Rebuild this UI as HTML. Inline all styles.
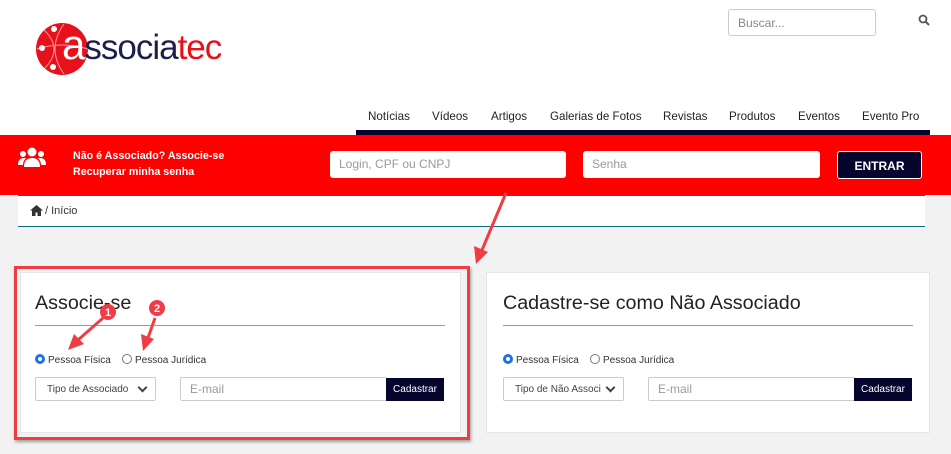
<!DOCTYPE html>
<html><head><meta charset="utf-8"><style>
*{box-sizing:border-box;margin:0;padding:0}
body{width:951px;height:454px;overflow:hidden;background:#f2f2f2;font-family:"Liberation Sans",sans-serif;position:relative}
.abs{position:absolute}
.top{left:0;top:0;width:951px;height:135px;background:#fff}
.nav{top:110px;font-size:11.6px;color:#222}
.card{background:#fff;border:1px solid #e6e6e6}
.title{font-size:19.7px;color:#222}
.hr{height:1px;background:#999}
.rad{font-size:10px;color:#333;top:354px}
.rad i{display:inline-block;width:10px;height:10px;border-radius:50%;border:1px solid #777;vertical-align:-1px;margin-right:3px}
.rad i.on{border:3px solid #1a73e8;box-shadow:inset 0 0 0 1px #fff}
.sel{height:24px;border:1px solid #ccc;border-radius:2px;font-size:10px;color:#444;padding:6px 0 0 11px;background:#fff}
.sel:after{content:"";position:absolute;right:9px;top:6px;width:5px;height:5px;border-right:2px solid #444;border-bottom:2px solid #444;transform:rotate(45deg)}
.em{height:24px;border:1px solid #ccc;border-radius:2px;font-size:12px;color:#999;padding:4px 0 0 9px;background:#fff}
.btn{height:23px;background:#05052e;color:#fff;font-size:10px;text-align:center;padding-top:6px}
</style></head><body>
<div class="abs top"></div>
<!-- logo -->
<svg class="abs" style="left:34px;top:21px" width="56" height="56" viewBox="0 0 56 56">
<circle cx="28" cy="28" r="26" fill="#e8101b"/>
<path d="M10 9 Q30 28 10 48 M30 3 Q12 28 30 53 M3 28 Q28 20 54 28" stroke="#fff" stroke-width="1" fill="none" opacity=".6"/>
<circle cx="20" cy="8" r="3" fill="#fff"/><circle cx="8" cy="27" r="3" fill="#fff"/><circle cx="19" cy="46" r="3" fill="#fff"/>
</svg>
<div class="abs" style="left:62px;top:23px;font-size:35px;letter-spacing:-1px;line-height:44px"><span style="color:#fff;font-size:42px">a</span><span style="color:#1c1f4a">ssocia</span><span style="color:#e8101b">tec</span></div>
<div class="abs" style="left:728px;top:9px;width:148px;height:27px;border:1px solid #ccc;border-radius:3px;font-size:12px;color:#888;padding:6px 0 0 9px">Buscar...</div>
<svg class="abs" style="left:918px;top:14px" width="12" height="12" viewBox="0 0 12 12"><circle cx="5" cy="5" r="3.5" stroke="#555" stroke-width="1.8" fill="none"/><path d="M7.5 7.5L11 11" stroke="#555" stroke-width="2"/></svg>
<div class="abs nav" style="left:368px">Notícias</div>
<div class="abs nav" style="left:432px">Vídeos</div>
<div class="abs nav" style="left:491px">Artigos</div>
<div class="abs nav" style="left:550px">Galerias de Fotos</div>
<div class="abs nav" style="left:663px">Revistas</div>
<div class="abs nav" style="left:729px">Produtos</div>
<div class="abs nav" style="left:798px">Eventos</div>
<div class="abs nav" style="left:862px">Evento Pro</div>
<div class="abs" style="left:356px;top:130px;width:574px;height:5px;background:#05052e"></div>
<!-- red bar -->
<div class="abs" style="left:0;top:135px;width:951px;height:60px;background:#fe0000"></div>
<svg class="abs" style="left:17px;top:147px" width="30" height="21" viewBox="0 0 30 21"><g fill="#fff"><circle cx="15" cy="5" r="4.5"/><circle cx="6" cy="7" r="3"/><circle cx="24" cy="7" r="3"/><path d="M7 20 Q7 11 15 11 Q23 11 23 20Z"/><path d="M1 18 Q1 11 7 11 L9 11 Q6 14 6 18Z"/><path d="M29 18 Q29 11 23 11 L21 11 Q24 14 24 18Z"/></g></svg>
<div class="abs" style="left:73px;top:148px;color:#fff;font-size:10.7px;font-weight:bold;line-height:16px">Não é Associado? Associe-se<br>Recuperar minha senha</div>
<div class="abs" style="left:330px;top:151px;width:236px;height:27px;background:#fff;border-radius:3px;font-size:12px;color:#999;padding:6px 0 0 9px">Login, CPF ou CNPJ</div>
<div class="abs" style="left:583px;top:151px;width:237px;height:27px;background:#fff;border-radius:3px;font-size:12px;color:#999;padding:6px 0 0 9px">Senha</div>
<div class="abs" style="left:837px;top:151px;width:85px;height:28px;background:#05052e;border:1px solid #fff;border-radius:3px;color:#fff;font-weight:bold;font-size:12px;text-align:center;padding-top:7px">ENTRAR</div>
<!-- breadcrumb -->
<div class="abs" style="left:18px;top:195px;width:907px;height:32px;background:#fff;border-top:1px solid #0a6a80;border-bottom:1px solid #0a6a80"></div>
<svg class="abs" style="left:30px;top:205px" width="13" height="11" viewBox="0 0 13 11"><path d="M6.5 0L0 5.5h2V11h3.5V7.5h2V11H11V5.5h2z" fill="#333"/></svg>
<div class="abs" style="left:45px;top:205px;font-size:11px;color:#333">/ Início</div>
<!-- cards -->
<div class="abs card" style="left:20px;top:272px;width:441px;height:161px"></div>
<div class="abs card" style="left:486px;top:272px;width:444px;height:161px"></div>
<div class="abs" style="left:14px;top:266px;width:456px;height:174px;border:3px solid #f03c44;box-shadow:1px 2px 3px rgba(0,0,0,.35)"></div>
<div class="abs title" style="left:35px;top:292px">Associe-se</div>
<div class="abs hr" style="left:35px;top:325px;width:410px"></div>
<div class="abs rad" style="left:35px"><i class="on"></i>Pessoa Física</div>
<div class="abs rad" style="left:122px"><i></i>Pessoa Jurídica</div>
<div class="abs sel" style="left:35px;top:377px;width:121px">Tipo de Associado</div>
<div class="abs em" style="left:180px;top:377px;width:207px">E-mail</div>
<div class="abs btn" style="left:386px;top:378px;width:58px">Cadastrar</div>
<div class="abs title" style="left:503px;top:292px">Cadastre-se como Não Associado</div>
<div class="abs hr" style="left:503px;top:325px;width:410px"></div>
<div class="abs rad" style="left:503px"><i class="on"></i>Pessoa Física</div>
<div class="abs rad" style="left:590px"><i></i>Pessoa Jurídica</div>
<div class="abs sel" style="left:503px;top:377px;width:121px">Tipo de Não Associ</div>
<div class="abs em" style="left:648px;top:377px;width:207px">E-mail</div>
<div class="abs btn" style="left:854px;top:378px;width:58px">Cadastrar</div>
<!-- annotations -->
<svg class="abs" style="left:0;top:0" width="951" height="454">
<g stroke="#f03c44" stroke-width="3" fill="none">
<path d="M506 193L482 250"/>
<path d="M103 318L78 340"/>
<path d="M155 318L148 338"/>
</g>
<g fill="#f03c44">
<path d="M476 264L474 246L488 252Z"/>
<path d="M68 350L74 334L84 344Z"/>
<path d="M143 351L141 334L154 339Z"/>
</g>
<circle cx="108" cy="312" r="8" fill="#f03c44"/><circle cx="157" cy="308" r="8" fill="#f03c44"/>
<text x="108" y="316" fill="#fff" font-size="11" font-weight="bold" text-anchor="middle" font-family="Liberation Sans">1</text>
<text x="157" y="312" fill="#fff" font-size="11" font-weight="bold" text-anchor="middle" font-family="Liberation Sans">2</text>
</svg>
</body></html>
